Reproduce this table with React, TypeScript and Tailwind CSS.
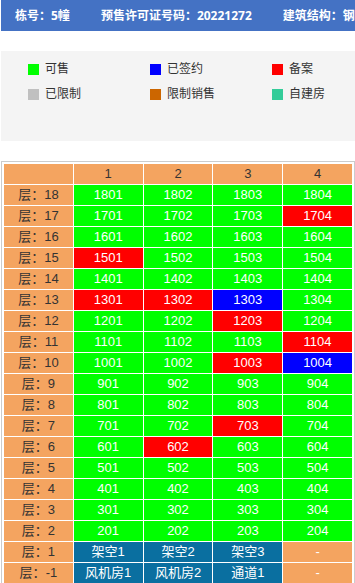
const font = "font-['Liberation_Sans','Noto_Sans_CJK_SC',sans-serif]";

type Cell = { t: string; c: 'g' | 'r' | 'b' | 'd' | 'o' };

const colors: Record<Cell['c'], string> = {
  g: 'bg-[#00ff00] text-white',
  r: 'bg-[#ff0000] text-white',
  b: 'bg-[#0000ff] text-white',
  d: 'bg-[#0a6fa0] text-white',
  o: 'bg-[#f4a460] text-white',
};

// special statuses, everything else is green
const special: Record<string, Cell['c']> = {
  '1704': 'r',
  '1501': 'r',
  '1301': 'r',
  '1302': 'r',
  '1303': 'b',
  '1203': 'r',
  '1104': 'r',
  '1003': 'r',
  '1004': 'b',
  '703': 'r',
  '602': 'r',
};

const rows: { floor: string; cells: Cell[] }[] = [];
for (let f = 18; f >= 2; f--) {
  const cells: Cell[] = [1, 2, 3, 4].map((n) => {
    const t = `${f}0${n}`;
    return { t, c: special[t] || 'g' };
  });
  rows.push({ floor: String(f), cells });
}
rows.push({
  floor: '1',
  cells: [
    { t: '架空1', c: 'd' },
    { t: '架空2', c: 'd' },
    { t: '架空3', c: 'd' },
    { t: '-', c: 'o' },
  ],
});
rows.push({
  floor: '-1',
  cells: [
    { t: '风机房1', c: 'd' },
    { t: '风机房2', c: 'd' },
    { t: '通道1', c: 'd' },
    { t: '-', c: 'o' },
  ],
});

const legend = [
  { label: '可售', color: 'bg-[#00ff00]' },
  { label: '已签约', color: 'bg-[#0000ff]' },
  { label: '备案', color: 'bg-[#ff0000]' },
  { label: '已限制', color: 'bg-[#c0c0c0]' },
  { label: '限制销售', color: 'bg-[#cc6600]' },
  { label: '自建房', color: 'bg-[#33cc99]' },
];

export default function App() {
  return (
    <div className={`pl-px w-[355px] overflow-hidden bg-white ${font}`}>
      <div className="h-[31px] bg-[#4472c4] flex items-center pl-[14px] gap-[31px] whitespace-nowrap overflow-hidden text-[12px] font-bold text-white font-['Noto_Sans','Noto_Sans_CJK_SC',sans-serif]">
        <span>栋号：5幢</span>
        <span>预售许可证号码：20221272</span>
        <span>建筑结构：钢筋混凝土</span>
      </div>

      <div className="mt-[20px] h-[90px] bg-[#f4f4f4] pt-[9px] pl-[27px]">
        <div className="grid grid-cols-[122px_122px_80px] gap-y-[7px]">
          {legend.map((l) => (
            <div key={l.label} className="flex items-center h-[18px] text-[12px] text-[#333]">
              <span className={`w-[11px] h-[11px] mr-[6px] ${l.color}`} />
              {l.label}
            </div>
          ))}
        </div>
      </div>

      <div className="mt-[20px] border border-[#cccccc] p-[2px]">
        <div className="grid grid-cols-5 gap-px text-[13px]">
          <div className="h-[20px] bg-[#f4a460]" />
          {[1, 2, 3, 4].map((n) => (
            <div key={n} className="h-[20px] bg-[#f4a460] text-[#333] flex items-center justify-center">
              {n}
            </div>
          ))}
          {rows.map((r) => (
            <>
              <div key={`f${r.floor}`} className="h-[20px] bg-[#f4a460] text-[#333] flex items-center justify-center">
                层：{r.floor}
              </div>
              {r.cells.map((c, i) => (
                <div key={`${r.floor}-${i}`} className={`h-[20px] flex items-center justify-center ${colors[c.c]}`}>
                  {c.t}
                </div>
              ))}
            </>
          ))}
        </div>
      </div>
    </div>
  );
}
